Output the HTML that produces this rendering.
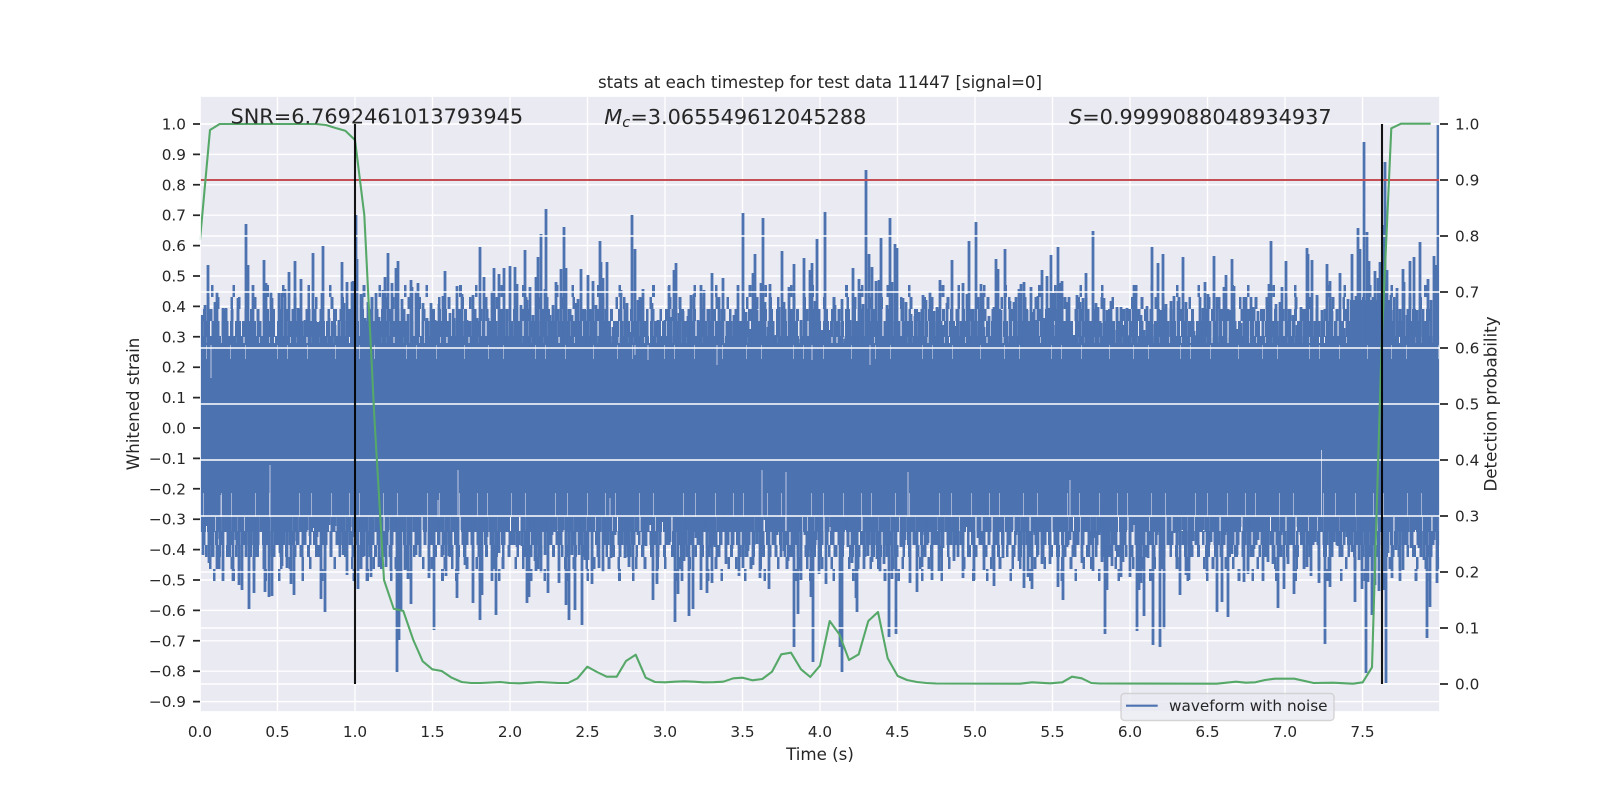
<!DOCTYPE html>
<html lang="en"><head><meta charset="utf-8"><title>stats at each timestep</title>
<style>html,body{margin:0;padding:0;background:#fff;width:1600px;height:800px;overflow:hidden}svg{display:block}text{font-family:"DejaVu Sans","Liberation Sans",sans-serif;fill:#262626}.t{font-size:15.28px}.l{font-size:16.67px}.a{font-size:20.83px}</style></head><body>
<svg width="1600" height="800" viewBox="0 0 1600 800" xmlns="http://www.w3.org/2000/svg">
<rect width="1600" height="800" fill="#fff"/>
<rect x="200" y="96" width="1240" height="616" fill="#eaeaf2"/>
<path fill="none" stroke="#fff" stroke-width="1.39" d="M200 124H1440M200 154.4H1440M200 184.8H1440M200 215.2H1440M200 245.6H1440M200 276H1440M200 306.4H1440M200 336.8H1440M200 367.2H1440M200 397.6H1440M200 428H1440M200 458.4H1440M200 488.8H1440M200 519.2H1440M200 549.6H1440M200 580H1440M200 610.4H1440M200 640.8H1440M200 671.2H1440M200 701.6H1440M277.5 96V712M355 96V712M432.5 96V712M510 96V712M587.5 96V712M665 96V712M742.5 96V712M820 96V712M897.5 96V712M975 96V712M1052.5 96V712M1130 96V712M1207.5 96V712M1285 96V712M1362.5 96V712"/>
<rect x="200" y="343" width="1240" height="174" fill="#4c72b0"/>
<rect x="1350" y="300" width="40" height="45" fill="#4c72b0"/>
<g fill="none" stroke="#4c72b0">
<path stroke-width="8" stroke-dasharray="6 1 8 1 5 1.5 9 1 4 1" d="M200 340H1440"/>
<path stroke-width="16" stroke-dasharray="3.5 1.5 5 1.5 2.5 1 4.500 2 7 1.5 3 2 6 1" d="M200 329H1440"/>
<path stroke-width="12" stroke-dasharray="2.500 3 4 2.500 3 4.500 5 3.500 2.500 3 3 5" d="M203 315H1440"/>
<path stroke-width="12" stroke-dasharray="2.500 7 3 11 2.500 5 2.500 13 3 8 2.500 17" d="M207 303H1440"/>
<path stroke-width="12" stroke-dasharray="2.500 19 2.500 31 3 13 2.500 23" d="M211 291H1440"/>
<path stroke-width="16" stroke-dasharray="6 1 8 1.5 5 1 9 1.500 4 1" d="M200 524H1440"/>
<path stroke-width="14" stroke-dasharray="3.500 2 5 2.500 2.500 1.500 4.500 3 7 2 3 3 6 1.500" d="M202 538H1440"/>
<path stroke-width="12" stroke-dasharray="2.500 3 4 3.500 3 5 5 4 2.500 3 3 6" d="M205 551H1440"/>
<path stroke-width="12" stroke-dasharray="2.500 6 3 10 2.500 5 2.500 12 3 7 2.500 15" d="M209 563H1440"/>
<path stroke-width="12" stroke-dasharray="2.500 17 2.500 29 3 11 2.500 21" d="M213 575H1440"/>
</g>
<path fill="none" stroke="#4c72b0" stroke-width="2.8" d="M202 315V350M205 305V350M208 265V350M215 302V350M217 292V350M223 308V350M226 308V350M232 310V350M238 298V350M246 224V350M248 265V350M253 285V350M258 316V350M264 260V350M266 283V350M271 292V350M272 298V350M279 293V350M282 293V350M285 289V350M289 272V350M295 261V350M298 308V350M301 279V350M305 320V350M309 318V350M313 253V350M313 294V350M318 322V350M322 293V350M323 246V350M329 318V350M335 325V350M339 320V350M342 262V350M344 303V350M347 282V350M352 282V350M353 281V350M356 215V350M357 259V350M361 294V350M365 318V350M368 302V350M372 304V350M376 293V350M379 317V350M383 290V350M385 277V350M388 253V350M392 283V350M396 268V350M398 261V350M402 299V350M408 314V350M411 280V350M412 287V350M416 291V350M418 283V350M423 303V350M427 318V350M431 303V350M435 320V350M439 304V350M443 296V350M445 271V350M450 313V350M454 318V350M457 286V350M462 294V350M467 320V350M473 295V350M477 318V350M480 247V350M484 277V350M488 318V350M492 291V350M494 268V350M499 274V350M504 268V350M507 310V350M510 266V350M515 267V350M517 284V350M521 305V350M525 250V350M527 300V350M530 287V350M533 315V350M536 277V350M538 257V350M541 234V350M545 289V350M546 209V350M550 315V350M553 305V350M556 282V350M561 269V350M564 227V350M566 268V350M569 309V350M572 315V350M576 303V350M578 299V350M581 269V350M585 310V350M588 275V350M591 310V350M593 281V350M596 305V350M600 241V350M601 262V350M603 278V350M607 262V350M609 332V350M613 327V350M616 335V350M620 345V350M621 290V350M625 313V350M627 303V350M630 332V350M632 215V350M635 249V350M638 300V350M641 298V350M643 289V350M648 345V350M652 303V350M655 321V350M658 320V350M661 342V350M665 320V350M669 286V350M671 317V350M674 270V350M676 263V350M679 313V350M683 311V350M688 316V350M691 295V350M694 294V350M698 320V350M701 285V350M704 290V350M709 310V350M712 273V350M716 321V350M719 297V350M723 278V350M727 322V350M731 322V350M734 315V350M738 285V350M741 332V350M743 213V350M746 312V350M750 329V350M753 273V350M755 254V350M757 310V350M761 283V350M763 218V350M765 302V350M768 327V350M770 284V350M773 332V350M776 335V350M779 307V350M782 251V350M784 302V350M789 287V350M792 311V350M794 264V350M798 339V350M801 320V350M804 258V350M806 319V350M810 270V350M812 263V350M815 301V350M817 239V350M822 330V350M825 212V350M829 330V350M835 305V350M839 322V350M842 299V350M845 339V350M850 320V350M853 268V350M856 333V350M859 279V350M860 289V350M863 304V350M866 170V350M869 254V350M872 267V350M876 281V350M879 280V350M881 238V350M887 305V350M890 218V350M892 282V350M895 244V350M897 248V350M903 298V350M906 302V350M911 314V350M915 316V350M919 312V350M923 295V350M926 300V350M930 292V350M934 311V350M937 307V350M940 280V350M943 325V350M947 303V350M952 260V350M956 326V350M961 321V350M963 283V350M967 294V350M969 241V350M972 321V350M976 222V350M981 284V350M983 291V350M984 327V350M989 316V350M994 307V350M996 259V350M998 269V350M1001 310V350M1005 249V350M1010 301V350M1014 302V350M1016 297V350M1019 289V350M1021 284V350M1024 282V350M1027 310V350M1031 287V350M1033 312V350M1036 320V350M1038 296V350M1042 270V350M1044 318V350M1047 276V350M1049 308V350M1051 255V350M1053 293V350M1056 325V350M1058 247V350M1060 283V350M1062 281V350M1067 302V350M1069 297V350M1071 330V350M1074 335V350M1077 295V350M1080 302V350M1083 298V350M1086 273V350M1089 333V350M1093 231V350M1096 303V350M1098 307V350M1101 323V350M1104 298V350M1107 310V350M1111 301V350M1114 330V350M1117 307V350M1121 307V350M1124 325V350M1127 308V350M1130 335V350M1133 302V350M1134 285V350M1136 297V350M1141 315V350M1144 330V350M1147 306V350M1152 247V350M1155 324V350M1158 263V350M1161 310V350M1163 254V350M1166 304V350M1171 301V350M1174 296V350M1178 301V350M1183 257V350M1186 302V350M1189 335V350M1194 331V350M1197 335V350M1200 297V350M1203 308V350M1205 282V350M1208 294V350M1214 256V350M1217 297V350M1220 318V350M1224 287V350M1226 275V350M1230 310V350M1232 259V350M1234 286V350M1237 329V350M1241 323V350M1244 297V350M1246 297V350M1251 297V350M1253 307V350M1258 311V350M1263 315V350M1267 305V350M1269 284V350M1271 241V350M1276 304V350M1280 302V350M1282 287V350M1286 261V350M1289 330V350M1293 315V350M1297 325V350M1301 307V350M1304 320V350M1307 248V350M1308 254V350M1312 260V350M1317 295V350M1322 310V350M1327 264V350M1330 281V350M1332 311V350M1336 325V350M1340 273V350M1344 328V350M1348 299V350M1352 254V350M1356 296V350M1358 228V350M1360 249V350M1364 142V350M1367 232V350M1369 261V350M1375 271V350M1378 278V350M1380 262V350M1384 225V350M1385 162V350M1387 270V350M1391 295V350M1394 310V350M1397 288V350M1403 269V350M1404 282V350M1407 315V350M1410 261V350M1414 257V350M1417 310V350M1420 242V350M1423 309V350M1428 279V350M1431 300V350M1434 256V350M1436 265V350M1438 125V350"/>
<path fill="none" stroke="#4c72b0" stroke-width="2.8" d="M203 555V510M206 526V510M209 563V510M213 548V510M217 569V510M220 539V510M223 581V510M229 553V510M233 581V510M236 540V510M239 585V510M242 590V510M246 557V510M249 609V510M254 593V510M257 534V510M261 532V510M265 592V510M269 597V510M272 596V510M276 537V510M280 553V510M282 566V510M287 568V510M291 584V510M294 595V510M297 541V510M300 530V510M304 543V510M307 530V510M310 536V510M314 528V510M317 537V510M321 599V510M325 612V510M329 525V510M335 526V510M340 544V510M343 555V510M347 575V510M350 527V510M353 537V510M358 589V510M361 528V510M364 556V510M367 581V510M371 577V510M373 539V510M376 530V510M379 567V510M382 566V510M386 567V510M388 530V510M391 571V510M394 528V510M397 672V510M399 640V510M401 610V510M405 570V510M408 579V510M411 604V510M416 555V510M420 549V510M424 530V510M429 578V510M434 630V510M437 530V510M440 528V510M443 555V510M446 576V510M449 556V510M453 530V510M457 598V510M458 574V510M462 530V510M465 565V510M470 530V510M473 603V510M476 530V510M480 620V510M482 595V510M487 537V510M492 581V510M496 615V510M499 553V510M503 535V510M508 530V510M513 537V510M517 547V510M522 546V510M527 603V510M529 597V510M532 530V510M535 561V510M536 571V510M541 573V510M545 555V510M548 593V510M552 535V510M556 530V510M559 583V510M563 530V510M566 605V510M569 620V510M572 555V510M575 610V510M579 555V510M582 625V510M585 560V510M588 560V510M592 584V510M597 540V510M599 568V510M603 572V510M606 545V510M611 558V510M615 535V510M621 542V510M625 558V510M629 567V510M633 569V510M638 535V510M643 557V510M646 546V510M650 525V510M653 600V510M657 584V510M660 530V510M663 522V510M667 530V510M670 542V510M675 622V510M678 594V510M682 581V510M684 561V510M687 530V510M689 616V510M693 609V510M696 538V510M701 590V510M704 530V510M707 593V510M710 548V510M712 583V510M715 547V510M719 530V510M723 527V510M726 564V510M732 549V510M736 530V510M739 576V510M743 568V510M748 551V510M753 565V510M757 544V510M760 578V510M765 520V510M769 589V510M773 527V510M777 535V510M781 557V510M784 551V510M788 561V510M792 547V510M794 647V510M798 614V510M801 580V510M805 535V510M809 550V510M811 597V510M813 662V510M816 540V510M819 574V510M822 537V510M826 584V510M831 527V510M834 530V510M837 532V510M840 647V510M842 672V510M845 530V510M848 547V510M852 563V510M856 598V510M857 612V510M860 530V510M864 569V510M868 556V510M872 562V510M877 559V510M880 572V510M884 564V510M889 637V510M892 579V510M896 634V510M901 547V510M905 540V510M910 583V510M914 535V510M917 592V510M922 567V510M925 535V510M928 543V510M932 580V510M936 530V510M939 571V510M943 548V510M947 527V510M950 530V510M954 561V510M958 557V510M963 578V510M967 527V510M970 530V510M974 580V510M978 538V510M984 570V510M987 525V510M990 515V510M994 586V510M998 540V510M1003 558V510M1007 527V510M1012 530V510M1016 535V510M1019 561V510M1024 588V510M1028 577V510M1032 589V510M1035 535V510M1038 555V510M1042 564V510M1045 542V510M1050 564V510M1054 530V510M1058 587V510M1063 600V510M1067 547V510M1070 540V510M1078 525V510M1082 563V510M1085 530V510M1089 557V510M1093 571V510M1095 538V510M1099 535V510M1102 562V510M1105 634V510M1107 590V510M1112 566V510M1116 551V510M1121 577V510M1123 562V510M1126 530V510M1130 577V510M1134 525V510M1137 631V510M1139 590V510M1141 583V510M1144 616V510M1148 558V510M1153 645V510M1157 535V510M1160 647V510M1164 629V510M1168 540V510M1174 533V510M1178 525V510M1180 595V510M1183 530V510M1186 575V510M1189 580V510M1193 541V510M1197 527V510M1203 530V510M1207 574V510M1211 542V510M1214 530V510M1217 612V510M1222 602V510M1225 535V510M1228 617V510M1232 554V510M1237 555V510M1240 527V510M1244 582V510M1248 574V510M1251 530V510M1254 549V510M1258 540V510M1263 581V510M1268 562V510M1273 564V510M1278 608V510M1281 535V510M1284 589V510M1288 564V510M1294 594V510M1298 527V510M1301 535V510M1304 569V510M1307 567V510M1311 576V510M1315 542V510M1319 583V510M1325 644V510M1330 587V510M1334 542V510M1338 546V510M1341 554V510M1347 537V510M1352 552V510M1355 602V510M1359 560V510M1362 589V510M1366 673V510M1368 582V510M1372 615V510M1375 585V510M1379 591V510M1384 590V510M1386 683V510M1388 553V510M1392 578V510M1396 550V510M1400 581V510M1403 570V510M1407 535V510M1411 548V510M1415 530V510M1419 548V510M1424 560V510M1427 638V510M1430 607V510M1434 540V510M1437 583V510"/>
<path fill="none" stroke="#e4e6f0" stroke-width="1" opacity=".75" d="M1321.5 450V517M211 378V345M221 495V517M270 465V517M438 500V517M458 470V517M610 498V517M762 470V517M786 472V517M908 472V517M1070 480V517M635 355V345M648 360V345M717 365V345M812 360V345M870 365V345"/>
<path fill="none" stroke="#e4e6f0" stroke-width="24" opacity=".55" stroke-dasharray="1 17 1 9 1 23 1 13 1 29 1 11 1 19" d="M203 505H1440"/>
<path fill="none" stroke="#e4e6f0" stroke-width="14" opacity=".5" stroke-dasharray="1 23 1 14 1 31 1 9 1 19 1 27" d="M206 352H1440"/>
<path fill="none" stroke="#fff" stroke-width="1.39" d="M200 124H1440M200 180H1440M200 236H1440M200 292H1440M200 348H1440M200 404H1440M200 460H1440M200 516H1440M200 572H1440M200 628H1440M200 684H1440"/>
<path fill="none" stroke="#c44e52" stroke-width="2.08" d="M200 180H1440"/>
<path fill="none" stroke="#55a868" stroke-width="2.08" stroke-linejoin="round" d="M200 240L210 130L219.7 124L316 124L325.9 125L335.6 128L345.3 130.7L355 140L364.3 215L374.4 418L384 580L393.7 608.7L403.3 611L413.3 640L422.7 661.3L432.3 669.3L441.7 671L451.7 677.7L461.6 682L471.3 683L481 683L490.6 682.5L500.3 682L510 683L519.7 683.3L529.4 682.7L539 682L548.8 682.5L558.4 683L568 683L577.5 678.3L587.3 666.7L597 672L606.7 676.7L616.7 676.7L626 661L635.7 654.7L645.7 677.7L655 682L665 682.3L674.7 681.7L684.4 681.3L694 681.7L703.7 682.3L713.4 682.2L723.3 681.7L733.3 678.3L742.7 677.7L752.3 680.3L762.3 679L772 671.7L781.3 654.3L791 652.7L801 669.3L810.3 677L820 665.7L829.7 621L839.3 634.3L849 660L858.7 654.3L868.3 621L878 612L887.7 658.3L897.7 676L907 680L916.9 682L926.6 683L936 683.5L1020 683.7L1032 682.3L1050 683.3L1062.3 682.3L1072 676.7L1081.7 678.3L1091.3 683L1100 683.5L1216.7 683.7L1236 681.7L1245.7 682.7L1255.3 682.3L1265 680L1275 678.7L1294.3 678.7L1313.7 683L1333 682.7L1353 683.7L1362.7 682.3L1372 667.3L1381.7 342L1391.3 128.3L1401 123.7L1430.7 123.7"/>
<path fill="none" stroke="#000" stroke-opacity=".92" stroke-width="2.08" d="M355 124V684M1382 124V684"/>
<rect x="200" y="96" width="1240" height="616" fill="none" stroke="#fff" stroke-width="1.74"/>
<path fill="none" stroke="#262626" stroke-width="1.74" d="M193 124H200M193 154.4H200M193 184.8H200M193 215.2H200M193 245.6H200M193 276H200M193 306.4H200M193 336.8H200M193 367.2H200M193 397.6H200M193 428H200M193 458.4H200M193 488.8H200M193 519.2H200M193 549.6H200M193 580H200M193 610.4H200M193 640.8H200M193 671.2H200M193 701.6H200M1440 124H1448M1440 180H1448M1440 236H1448M1440 292H1448M1440 348H1448M1440 404H1448M1440 460H1448M1440 516H1448M1440 572H1448M1440 628H1448M1440 684H1448"/>
<rect x="1121" y="693.5" width="213" height="27" rx="3.5" fill="#eaeaf2" fill-opacity=".8" stroke="#ccc" stroke-opacity=".8" stroke-width="1.39"/>
<path fill="none" stroke="#4c72b0" stroke-width="2.08" d="M1126 705.7H1157.7"/>
<text class="t" x="1169" y="711">waveform with noise</text>
<text class="l" x="820" y="88" text-anchor="middle" textLength="444" lengthAdjust="spacing">stats at each timestep for test data 11447 [signal=0]</text>
<text class="a" x="230.5" y="123.5">SNR=6.7692461013793945</text>
<text class="a" x="604.3" y="124"><tspan font-style="italic">M</tspan><tspan font-style="italic" font-size="14.6" dy="3.2">c</tspan><tspan dy="-3.2">=3.065549612045288</tspan></text>
<text class="a" x="1069" y="124"><tspan font-style="italic">S</tspan>=0.9999088048934937</text>
<g class="t" text-anchor="end">
<text class="t" x="186" y="129.5">1.0</text><text class="t" x="186" y="160">0.9</text><text class="t" x="186" y="190.3">0.8</text><text class="t" x="186" y="220.7">0.7</text><text class="t" x="186" y="251.1">0.6</text><text class="t" x="186" y="281.5">0.5</text><text class="t" x="186" y="311.9">0.4</text><text class="t" x="186" y="342.3">0.3</text><text class="t" x="186" y="372.7">0.2</text><text class="t" x="186" y="403.1">0.1</text><text class="t" x="186" y="433.5">0.0</text><text class="t" x="186" y="463.9">−0.1</text><text class="t" x="186" y="494.3">−0.2</text><text class="t" x="186" y="524.7">−0.3</text><text class="t" x="186" y="555.1">−0.4</text><text class="t" x="186" y="585.5">−0.5</text><text class="t" x="186" y="615.9">−0.6</text><text class="t" x="186" y="646.3">−0.7</text><text class="t" x="186" y="676.7">−0.8</text><text class="t" x="186" y="707.1">−0.9</text>
</g>
<text class="t" x="1455" y="129.5">1.0</text><text class="t" x="1455" y="185.5">0.9</text><text class="t" x="1455" y="241.5">0.8</text><text class="t" x="1455" y="297.5">0.7</text><text class="t" x="1455" y="353.5">0.6</text><text class="t" x="1455" y="409.5">0.5</text><text class="t" x="1455" y="465.5">0.4</text><text class="t" x="1455" y="521.5">0.3</text><text class="t" x="1455" y="577.5">0.2</text><text class="t" x="1455" y="633.5">0.1</text><text class="t" x="1455" y="689.5">0.0</text>
<g text-anchor="middle">
<text class="t" x="200" y="737">0.0</text><text class="t" x="277.5" y="737">0.5</text><text class="t" x="355" y="737">1.0</text><text class="t" x="432.5" y="737">1.5</text><text class="t" x="510" y="737">2.0</text><text class="t" x="587.5" y="737">2.5</text><text class="t" x="665" y="737">3.0</text><text class="t" x="742.5" y="737">3.5</text><text class="t" x="820" y="737">4.0</text><text class="t" x="897.5" y="737">4.5</text><text class="t" x="975" y="737">5.0</text><text class="t" x="1052.5" y="737">5.5</text><text class="t" x="1130" y="737">6.0</text><text class="t" x="1207.5" y="737">6.5</text><text class="t" x="1285" y="737">7.0</text><text class="t" x="1362.5" y="737">7.5</text>
<text class="l" x="820" y="760">Time (s)</text>
<text class="l" transform="translate(139 404) rotate(-90)">Whitened strain</text>
<text class="l" transform="translate(1496.5 404) rotate(-90)">Detection probability</text>
</g>
</svg>
</body></html>
